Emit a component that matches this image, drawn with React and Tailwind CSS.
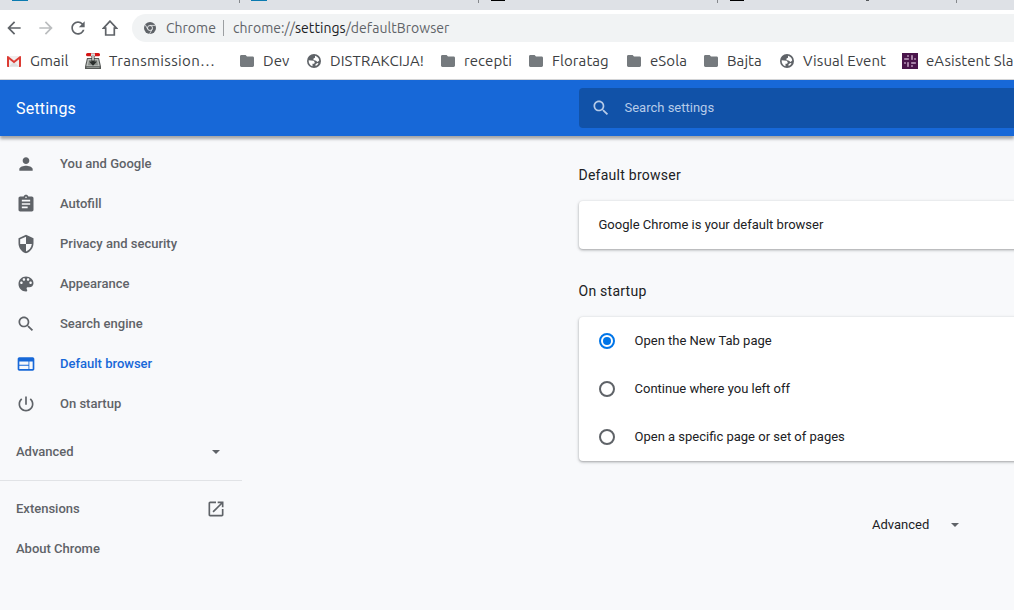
import React from "react";

const PERSON = "M12 12c2.21 0 4-1.79 4-4s-1.79-4-4-4-4 1.79-4 4 1.79 4 4 4zm0 2c-2.67 0-8 1.34-8 4v2h16v-2c0-2.66-5.33-4-8-4z";
const CLIPBOARD = "M19 3h-4.18C14.4 1.84 13.3 1 12 1c-1.3 0-2.4.84-2.82 2H5c-1.1 0-2 .9-2 2v14c0 1.1.9 2 2 2h14c1.1 0 2-.9 2-2V5c0-1.1-.9-2-2-2zm-7 0c.55 0 1 .45 1 1s-.45 1-1 1-1-.45-1-1 .45-1 1-1zm2 14H7v-2h7v2zm3-4H7v-2h10v2zm0-4H7V7h10v2z";
const SHIELD = "M12 1L3 5v6c0 5.55 3.84 10.74 9 12 5.16-1.26 9-6.45 9-12V5l-9-4zm0 10.99h7c-.53 4.12-3.28 7.79-7 8.94V12H5V6.3l7-3.11v8.8z";
const PALETTE = "M12 3c-4.97 0-9 4.03-9 9s4.03 9 9 9c.83 0 1.5-.67 1.5-1.5 0-.39-.15-.74-.39-1.01-.23-.26-.38-.61-.38-.99 0-.83.67-1.5 1.5-1.5H16c2.76 0 5-2.24 5-5 0-4.42-4.03-8-9-8zm-5.5 9c-.83 0-1.5-.67-1.5-1.5S5.67 9 6.5 9 8 9.67 8 10.500 7.330 12 6.500 12zm3-4C8.670 8 8 7.330 8 6.500S8.670 5 9.500 5s1.500.670 1.500 1.500S10.330 8 9.500 8zm5 0c-.830 0-1.500-.670-1.500-1.500S13.670 5 14.500 5s1.500.670 1.500 1.500S15.330 8 14.500 8zm3 4c-.830 0-1.500-.670-1.500-1.500S16.670 9 17.500 9s1.500.670 1.500 1.500-.670 1.500-1.500 1.500z";
const SEARCH = "M15.5 14h-.79l-.28-.27C15.41 12.59 16 11.11 16 9.5 16 5.91 13.09 3 9.5 3S3 5.91 3 9.5 5.91 16 9.5 16c1.61 0 3.09-.59 4.23-1.57l.27.28v.79l5 4.99L20.49 19l-4.99-5zm-6 0C7.01 14 5 11.99 5 9.5S7.01 5 9.5 5 14 7.01 14 9.5 11.99 14 9.5 14z";
const WEB = "M20 4H4c-1.1 0-1.99.9-1.99 2L2 18c0 1.1.9 2 2 2h16c1.1 0 2-.9 2-2V6c0-1.1-.9-2-2-2zm-5 14H4v-4h11v4zm0-5H4V9h11v4zm5 5h-4V9h4v9z";
const POWER = "M13 3h-2v10h2V3zm4.830 2.170l-1.420 1.420C17.990 7.860 19 9.810 19 12c0 3.870-3.130 7-7 7s-7-3.130-7-7c0-2.190 1.010-4.140 2.580-5.420L6.170 5.170C4.230 6.820 3 9.260 3 12c0 4.970 4.030 9 9 9s9-4.030 9-9c0-2.740-1.230-5.180-3.170-6.830z";
const LAUNCH = "M19 19H5V5h7V3H5c-1.110 0-2 .9-2 2v14c0 1.100.890 2 2 2h14c1.100 0 2-.9 2-2v-7h-2v7zM14 3v2h3.590l-9.830 9.830 1.410 1.410L19 6.410V10h2V3h-7z";
const BACK = "M20 11H7.830l5.590-5.590L12 4l-8 8 8 8 1.410-1.410L7.830 13H20v-2z";
const FORWARD = "M12 4l-1.410 1.410L16.170 11H4v2h12.170l-5.580 5.590L12 20l8-8z";
const RELOAD = "M17.650 6.350C16.200 4.900 14.210 4 12 4c-4.420 0-7.990 3.580-7.990 8s3.570 8 7.990 8c3.730 0 6.840-2.550 7.730-6h-2.080c-.820 2.330-3.040 4-5.650 4-3.310 0-6-2.690-6-6s2.690-6 6-6c1.660 0 3.140.690 4.220 1.780L13 11h7V4l-2.350 2.350z";

function Icon({ d, className }) {
  return (
    <svg viewBox="0 0 24 24" fill="currentColor" className={`shrink-0 ${className}`}>
      <path d={d} />
    </svg>
  );
}

function Caret() {
  return (
    <svg viewBox="0 0 8 4" className="h-1 w-2 shrink-0 fill-[#5f6368]">
      <path d="M0 0h8L4 4z" />
    </svg>
  );
}

function Folder() {
  return (
    <svg viewBox="0 0 14 12" className="h-3 w-3.5 shrink-0 fill-[#757a7e]">
      <path d="M1.400 0h4.200L7 1.500h5.600c.8 0 1.400.6 1.400 1.400v7.700c0 .8-.6 1.400-1.400 1.400H1.400C.6 12 0 11.400 0 10.600V1.400C0 .6.600 0 1.400 0z" />
    </svg>
  );
}

function Globe() {
  return (
    <svg viewBox="0 0 14 14" className="size-3.5 shrink-0">
      <circle cx="7" cy="7" r="7" fill="#5f6368" />
      <path d="M1.700 6.300 4 6.600l2.800.2 1 1.600-.7 1.400H5.500v2.400C3 11.600 1.300 9.200 1.700 6.300z" fill="#fff" />
      <path d="M8 1.800c2.300.5 4 2.500 4.200 4.700L10.500 8 9 6.800 6.500 6V4.400L8 3.800z" fill="#fff" />
      <path d="M8.500 10.200l2-1.200 1 .6c-.7 1.200-1.600 2-2.900 2.400z" fill="#fff" />
    </svg>
  );
}

function Gmail() {
  return (
    <svg viewBox="0 0 14 11" className="h-[11px] w-3.5 shrink-0">
      <path d="M1 0h12v11H1z" fill="#f1eeee" />
      <path d="M2 10.500 7 6l5 4.500z" fill="#dedede" />
      <path d="M0 1C0 .4.400 0 1 0l6 4.700L13 0c.6 0 1 .4 1 1v9c0 .6-.4 1-1 1h-1V3.300L7 7.200 2 3.300V11H1c-.6 0-1-.4-1-1z" fill="#dc3b33" />
    </svg>
  );
}

function Transmission() {
  return (
    <svg viewBox="0 0 16 16" className="size-4 shrink-0">
      <path d="M2 5h12l2 8.500V16H0v-2.500z" fill="#555856" />
      <path d="M2.800 6h10.400l1.600 7.200H1.200z" fill="#b9bdba" />
      <path d="M4 7h8l1 5.200H3z" fill="#8a8f8b" />
      <rect x="1" width="14" height="3.200" rx="1.500" fill="#d41515" />
      <path d="M6 .3h4v2.600H6z" fill="#dadada" />
      <path d="M6.500 3h3v5.500H12L8 12.800 4 8.500h2.500z" fill="#2a2e2c" />
      <path d="M7 2h2v5.500H7z" fill="#b5b8b5" />
      <path d="M1.500 14h13v1h-13z" fill="#8c918d" />
    </svg>
  );
}

function Slack() {
  return (
    <svg viewBox="0 0 16 16" className="size-4 shrink-0">
      <path d="M0 0h16v16H0z" fill="#4a154b" />
      <g fill="#a783a8">
        <rect x="5" y="2" width="2" height="2" rx=".8" />
        <rect x="2" y="5" width="5" height="2" rx=".8" />
        <rect x="9" y="2" width="2" height="5" rx=".8" />
        <rect x="12" y="5" width="2" height="2" rx=".8" />
        <rect x="2" y="9" width="2" height="2" rx=".8" />
        <rect x="5" y="9" width="2" height="5" rx=".8" />
        <rect x="9" y="9" width="5" height="2" rx=".8" />
        <rect x="9" y="12" width="2" height="2" rx=".8" />
      </g>
    </svg>
  );
}

function ChromeMark() {
  return (
    <svg viewBox="0 0 12 12" className="size-3 shrink-0">
      <circle cx="6" cy="6" r="6" fill="#5f6368" />
      <circle cx="6" cy="6" r="2.500" fill="#5f6368" stroke="#f1f3f4" strokeWidth=".9" />
      <path d="M6 3.400h5.300M3.800 7.300 1.200 2.700M8.200 7.300 5.600 11.800" stroke="#f1f3f4" strokeWidth=".8" />
    </svg>
  );
}

const bookmarks = [
  { label: "Gmail", Mark: Gmail, box: "w-[78px] gap-[9px] tracking-[0.08px]" },
  { label: "Transmission…", Mark: Transmission, box: "w-[155px] gap-2 tracking-[0.35px]" },
  { label: "Dev", Mark: Folder, box: "w-[67px] gap-[9px] tracking-[0.08px]" },
  { label: "DISTRAKCIJA!", Mark: Globe, box: "w-[134px] gap-[9px] tracking-[0.08px]" },
  { label: "recepti", Mark: Folder, box: "w-[88px] gap-[9px] tracking-[0.08px]" },
  { label: "Floratag", Mark: Folder, box: "w-[98px] gap-[9px] tracking-[0.08px]" },
  { label: "eSola", Mark: Folder, box: "w-[77px] gap-[9px] tracking-[0.08px]" },
  { label: "Bajta", Mark: Folder, box: "w-[76px] gap-[9px] tracking-[0.08px]" },
  { label: "Visual Event", Mark: Globe, box: "w-[122px] gap-[9px] tracking-[0.08px]" },
  { label: "eAsistent Sla", Mark: Slack, box: "w-[112px] gap-2 tracking-[0.08px]" },
];

const menu = [
  ["You and Google", PERSON],
  ["Autofill", CLIPBOARD],
  ["Privacy and security", SHIELD],
  ["Appearance", PALETTE],
  ["Search engine", SEARCH],
  ["Default browser", WEB],
  ["On startup", POWER],
];

const startup = ["Open the New Tab page", "Continue where you left off", "Open a specific page or set of pages"];

function TabStrip() {
  return (
    <div className="flex h-2.5 shrink-0 items-start overflow-hidden bg-[#dee1e6]">
      <i className="ml-3 h-px w-4 bg-[#0a7ab0]" />
      <i className="ml-[211px] h-[3px] w-px bg-[#85888c]" />
      <i className="ml-[11px] h-px w-4 bg-[#0a7ab0]" />
      <i className="ml-[211px] h-[3px] w-px bg-[#85888c]" />
      <i className="ml-3 h-px w-[14px] bg-black" />
      <i className="ml-[212px] h-[3px] w-px bg-[#85888c]" />
      <i className="ml-3 h-px w-[14px] bg-black" />
      <i className="ml-[122px] h-px w-[3px] bg-[#55585c]" />
      <i className="ml-[87px] h-[3px] w-px bg-[#85888c]" />
    </div>
  );
}

function Radio({ checked }) {
  return (
    <span className={`flex size-4 shrink-0 items-center justify-center rounded-full border-2 ${checked ? "border-[#0075e8]" : "border-[#5f6368]"}`}>
      {checked && <span className="size-2 rounded-full bg-[#0075e8]" />}
    </span>
  );
}

const card = "w-[680px] rounded bg-white shadow-[0_1px_2px_0_rgba(60,64,67,0.3),0_1px_3px_1px_rgba(60,64,67,0.15)]";

export default function App() {
  return (
    <div className="flex h-[610px] w-[1014px] flex-col overflow-hidden bg-[#f8f9fb] font-[Roboto,sans-serif] text-[13px] whitespace-nowrap text-[#202124]">
      <TabStrip />
      <div className="flex h-9 shrink-0 items-center bg-white pl-1 font-[Ubuntu,'Noto_Sans',sans-serif] text-[#5f6368]">
        <Icon d={BACK} className="size-5" />
        <Icon d={FORWARD} className="ml-3 size-5 text-[#bbbdbf]" />
        <Icon d={RELOAD} className="ml-3 size-5" />
        <svg viewBox="0 0 16 16" className="ml-3.5 size-4 shrink-0" fill="none" stroke="currentColor" strokeWidth="1.700">
          <path d="M8 1.200 1.500 8.200h2.200V15h8.600V8.200h2.200z" />
        </svg>
        <div className="ml-3.5 flex h-7 flex-1 items-center rounded-l-full bg-[#f1f3f4] pl-3 text-[14px]">
          <ChromeMark />
          <span className="ml-2.5 w-[57px]">Chrome</span>
          <i className="h-4 w-px bg-[#9c9fa2]" />
          <span className="ml-[9px] tracking-[0.05px]">chrome://<span className="text-[#202124]">settings</span>/defaultBrowser</span>
        </div>
      </div>
      <div className="flex h-[34px] shrink-0 items-center overflow-hidden border-b border-[#d4d5d7] bg-white pb-[3px] pl-[7px] font-[Ubuntu,'Noto_Sans',sans-serif] text-[15px] text-[#3c4043]">
        {bookmarks.map(({ label, Mark, box }) => (
          <div key={label} className={`flex shrink-0 items-center ${box}`}>
            <Mark />
            <span>{label}</span>
          </div>
        ))}
      </div>
      <header className="z-10 flex h-14 shrink-0 items-center bg-[#1768d8] pl-4 shadow-[0_3px_3px_0_rgba(0,0,0,0.34)]">
        <h1 className="w-[563px] pt-0.5 text-[16px] tracking-[0.2px] text-white">Settings</h1>
        <div className="flex h-10 flex-1 items-center rounded-l-sm bg-[#1152a8] pl-3 text-[#b6cbe8]">
          <Icon d={SEARCH} className="size-5" />
          <span className="ml-[13.5px]">Search settings</span>
        </div>
      </header>
      <div className="flex flex-1">
        <aside className="w-[242px] shrink-0 pt-2 font-medium text-[#5f6368]">
          {menu.map(([label, d]) => (
            <div key={label} className={`flex h-10 items-center pl-4 ${label === "Default browser" ? "text-[#1768d8]" : ""}`}>
              <Icon d={d} className="size-5" />
              <span className="ml-6">{label}</span>
            </div>
          ))}
          <div className="mt-2 flex h-10 items-center justify-between pr-[22px] pl-4">
            Advanced
            <Caret />
          </div>
          <div className="mt-2 mb-2 h-px bg-[#e1e3e6]" />
          <div className="flex h-10 items-center justify-between pr-4 pl-4">
            Extensions
            <Icon d={LAUNCH} className="size-5" />
          </div>
          <div className="flex h-10 items-center pl-4">About Chrome</div>
        </aside>
        <main className="ml-[336.5px] flex w-[680px] shrink-0 flex-col">
          <h2 className="mt-[27px] h-6 text-[14px] leading-6 tracking-[0.25px]">Default browser</h2>
          <section className={`mt-3.5 flex h-12 items-center pl-5 ${card}`}>Google Chrome is your default browser</section>
          <h2 className="mt-[30px] h-6 text-[14px] leading-6 tracking-[0.25px]">On startup</h2>
          <section className={`mt-3.5 ${card}`}>
            {startup.map((label, i) => (
              <div key={label} className="flex h-12 items-center gap-5 pl-5">
                <Radio checked={i === 0} />
                {label}
              </div>
            ))}
          </section>
          <div className="mt-11 flex h-10 items-center gap-[22px] pl-[293.5px]">
            Advanced
            <Caret />
          </div>
        </main>
      </div>
    </div>
  );
}
